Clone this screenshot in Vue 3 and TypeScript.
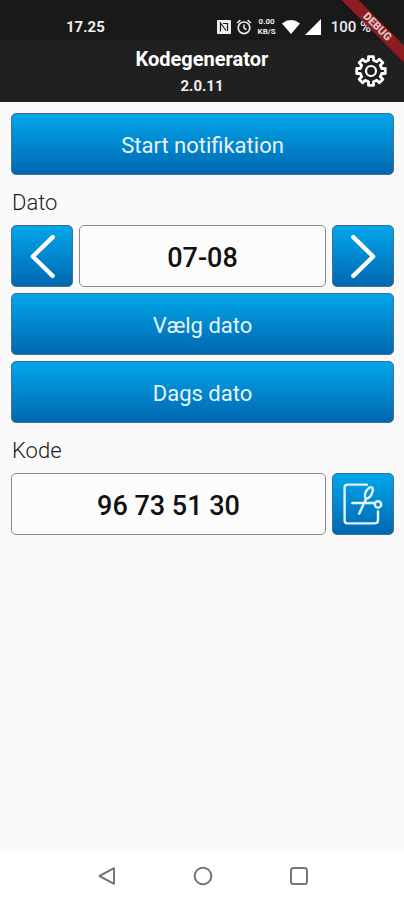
<script setup lang="ts">
import { ref } from 'vue'

const day = ref(new Date(2022, 7, 7))
const dateText = ref('07-08')
const code = ref('96 73 51 30')

function show(date: Date): void {
  day.value = date
  const dd = String(date.getDate()).padStart(2, '0')
  const mm = String(date.getMonth() + 1).padStart(2, '0')
  dateText.value = `${dd}-${mm}`
}

function shift(days: number): void {
  const next = new Date(day.value)
  next.setDate(next.getDate() + days)
  show(next)
}

// Outline of an eight-toothed gear centred on 16,16.
function gearPath(): string {
  const points: string[] = []
  const profile: [number, number][] = [
    [-13, 11],
    [-10, 14.5],
    [10, 14.5],
    [13, 11],
  ]
  for (let tooth = 0; tooth < 8; tooth++) {
    for (const [offset, radius] of profile) {
      const angle = ((tooth * 45 + offset) * Math.PI) / 180
      points.push(`${(16 + radius * Math.sin(angle)).toFixed(2)} ${(16 - radius * Math.cos(angle)).toFixed(2)}`)
    }
  }
  return `M${points.join('L')}Z`
}
const gear = gearPath()
</script>

<template>
  <div class="screen">
    <div class="status">
      <span class="clock">17.25</span>
      <div class="indicators">
        <svg class="nfc" viewBox="0 0 14 14" aria-hidden="true">
          <rect width="14" height="14" rx="1" fill="#eee" />
          <path d="M3.5 11.5V3L9 10.5M6 3.5h4.5V11" fill="none" stroke="#191919" stroke-width="1.2" />
        </svg>
        <svg class="alarm" viewBox="0 0 16 16" fill="none" stroke="#eee" aria-hidden="true">
          <circle cx="8" cy="8.8" r="5.8" stroke-width="1.7" />
          <path d="M8 5.5V9l2.4 1.6M1 4l3.4-2.8M15 4l-3.4-2.8" stroke-width="1.5" />
        </svg>
        <div class="rate"><span>0.00</span><span>KB/S</span></div>
        <svg class="wifi" viewBox="0 0 18 14" aria-hidden="true">
          <path d="M0 3.4Q9-3.2 18 3.4L9 14Z" fill="#fff" />
        </svg>
        <svg class="signal" viewBox="0 0 16 16" aria-hidden="true">
          <path d="M16 0V16H0Z" fill="#fff" />
        </svg>
        <span class="battery">100 %</span>
      </div>
    </div>

    <header class="bar">
      <div class="titles">
        <h1>Kodegenerator</h1>
        <p>2.0.11</p>
      </div>
      <button class="settings" type="button" aria-label="Indstillinger">
        <svg viewBox="0 0 32 32" fill="none" stroke="#fff" stroke-width="2.8" stroke-linejoin="round">
          <path :d="gear" />
          <circle cx="16" cy="16" r="5" stroke-width="2.2" />
        </svg>
      </button>
    </header>

    <div class="corner"><span class="ribbon">DEBUG</span></div>

    <main class="content">
      <button class="action" type="button">Start notifikation</button>

      <label class="caption" for="date">Dato</label>
      <div class="stack">
        <div class="row">
          <button class="action square" type="button" aria-label="Forrige dag" @click="shift(-1)">
            <svg viewBox="0 0 62 62"><path d="M42 11.500L21.500 31.500L42 51.500" /></svg>
          </button>
          <input id="date" class="field" type="text" readonly :value="dateText" />
          <button class="action square" type="button" aria-label="Næste dag" @click="shift(1)">
            <svg viewBox="0 0 62 62"><path d="M21 11.500L41.500 31.500L21 51.500" /></svg>
          </button>
        </div>
        <button class="action" type="button">Vælg dato</button>
        <button class="action" type="button" @click="show(new Date())">Dags dato</button>
      </div>

      <label class="caption" for="code">Kode</label>
      <div class="row">
        <input id="code" class="field" type="text" readonly :value="code" />
        <button class="action square cut" type="button" aria-label="Klip kode">
          <svg viewBox="0 0 62 62">
            <path d="M35 11H15Q12 11 12 14V48Q12 51 15 51H43Q46.500 51 46.500 47.500V38.500" />
            <path d="M20 30H43M27 41L34 26" />
            <circle cx="46.500" cy="31.500" r="3.300" />
            <ellipse cx="37" cy="19.500" rx="3.200" ry="6.500" transform="rotate(28 37 19.500)" />
          </svg>
        </button>
      </div>
    </main>

    <nav class="system" aria-label="System">
      <button type="button" aria-label="Tilbage">
        <svg viewBox="0 0 20 20"><path d="M17 2.200V17.800L2.500 10Z" /></svg>
      </button>
      <button type="button" aria-label="Hjem">
        <svg viewBox="0 0 20 20"><circle cx="10" cy="10" r="8.300" /></svg>
      </button>
      <button type="button" aria-label="Seneste">
        <svg viewBox="0 0 20 20"><rect x="2" y="2" width="16" height="16" rx="2.500" /></svg>
      </button>
    </nav>
  </div>
</template>

<style>
body {
  margin: 0;
  background: #fafafa;
}
</style>

<style scoped>
.screen {
  position: relative;
  display: flex;
  flex-direction: column;
  min-height: 100vh;
  background: #fafafa;
  color: #111;
  font-family: Roboto, "Liberation Sans", sans-serif;
}

button {
  padding: 0;
  border: 0;
  background: none;
  font: inherit;
  cursor: pointer;
}

svg {
  display: block;
}

.status {
  display: flex;
  justify-content: space-between;
  align-items: center;
  box-sizing: border-box;
  height: 40px;
  padding: 14px 33px 0 66px;
  background: #191919;
  color: #eee;
  font-size: 15px;
  font-weight: 700;
  line-height: 20px;
}

.indicators {
  display: flex;
  align-items: center;
  gap: 5px;
}

.nfc {
  width: 14px;
  height: 14px;
}

.alarm {
  width: 16px;
  height: 16px;
}

.rate {
  display: flex;
  flex-direction: column;
  align-items: center;
  width: 20px;
  font-size: 8px;
  line-height: 10px;
}

.wifi {
  width: 18px;
  height: 14px;
}

.signal {
  width: 16px;
  height: 16px;
}

.battery {
  margin-left: 5px;
  font-weight: 500;
}

.bar {
  display: grid;
  grid-template-columns: 1fr auto 1fr;
  align-items: center;
  height: 62px;
  padding: 0 17px;
  background: #202020;
  color: #fff;
}

.titles {
  grid-column: 2;
  padding-top: 2px;
  text-align: center;
}

.titles h1 {
  margin: 0;
  font-size: 20px;
  font-weight: 700;
  line-height: 28px;
}

.titles p {
  margin: 0;
  color: #eee;
  font-size: 15px;
  font-weight: 700;
  line-height: 26px;
}

.settings {
  justify-self: end;
}

.settings svg {
  width: 32px;
  height: 32px;
}

.corner {
  position: absolute;
  top: 0;
  right: 0;
  width: 72px;
  height: 72px;
  overflow: hidden;
  pointer-events: none;
}

.ribbon {
  position: absolute;
  top: 21px;
  right: -33px;
  width: 120px;
  background: #8e1c20;
  color: #dcc8c8;
  font-size: 11px;
  font-weight: 900;
  line-height: 12px;
  text-align: center;
  transform: rotate(45deg);
}

.content {
  display: flex;
  flex: 1;
  flex-direction: column;
  padding: 11px 10px 11px 11px;
}

.stack {
  display: flex;
  flex-direction: column;
  gap: 6px;
}

.row {
  display: flex;
  gap: 6px;
}

.caption {
  padding: 6px 1px 0;
  color: #1a1a1a;
  font-size: 22px;
  font-weight: 300;
  line-height: 44px;
}

.action {
  box-sizing: border-box;
  height: 62px;
  padding-top: 2px;
  border: 1px solid #41718c;
  border-radius: 5px;
  background: linear-gradient(#02a6ea, #0167b1);
  color: #e6f4fc;
  font-size: 22px;
}

.square {
  flex: none;
  width: 62px;
  padding-top: 0;
}

.square svg {
  width: 60px;
  height: 60px;
  fill: none;
  stroke: #fff;
  stroke-width: 4.5;
  stroke-linecap: round;
  stroke-linejoin: round;
}

.cut svg {
  stroke: #e2f4ff;
  stroke-width: 2.5;
}

.field {
  flex: 1;
  box-sizing: border-box;
  min-width: 0;
  height: 62px;
  padding: 3px 0 0;
  border: 1px solid #888;
  border-radius: 5px;
  background: #fcfcfc;
  color: #111;
  font: inherit;
  font-size: 27px;
  font-weight: 500;
  text-align: center;
}

.system {
  display: flex;
  justify-content: center;
  gap: 76px;
  padding: 15px 0 14px 2px;
  background: #fff;
}

.system svg {
  width: 20px;
  height: 20px;
  fill: none;
  stroke: #777;
  stroke-width: 2;
  stroke-linejoin: round;
}
</style>
